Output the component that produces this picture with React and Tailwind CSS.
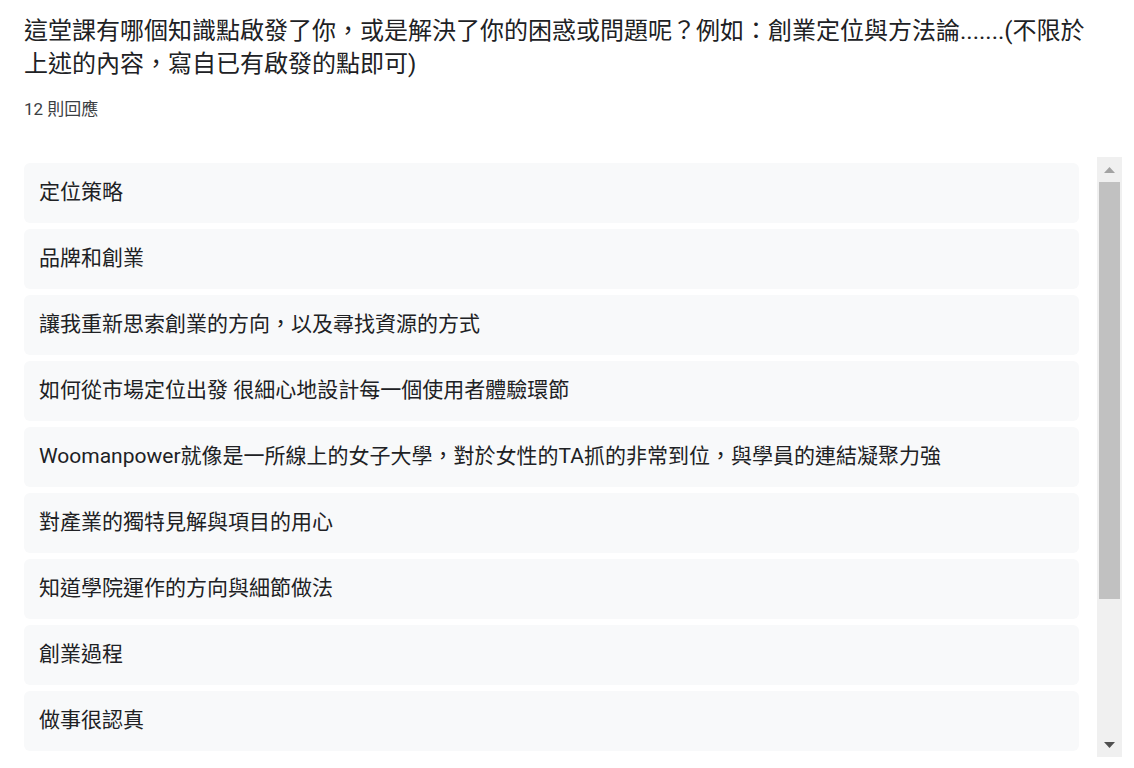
import React from 'react';

const answers = [
  '定位策略',
  '品牌和創業',
  '讓我重新思索創業的方向，以及尋找資源的方式',
  '如何從市場定位出發 很細心地設計每一個使用者體驗環節',
  'Woomanpower就像是一所線上的女子大學，對於女性的TA抓的非常到位，與學員的連結凝聚力強',
  '對產業的獨特見解與項目的用心',
  '知道學院運作的方向與細節做法',
  '創業過程',
  '做事很認真',
];

const font = { fontFamily: 'Roboto, "Noto Sans CJK TC", sans-serif' };

const App = () => {
  return (
    <div className="w-[1134px] h-[768px] bg-white overflow-hidden text-[#202124]" style={font}>
      <div className="pl-[24px] pr-[40px] pt-[15px]">
        <h1 className="text-[24px] leading-[33px] font-normal">
          這堂課有哪個知識點啟發了你，或是解決了你的困惑或問題呢？例如：創業定位與方法論.......(不限於上述的內容，寫自已有啟發的點即可)
        </h1>
        <p className="mt-[16px] text-[17px] leading-[24px] text-[#3c4043]">12 則回應</p>
      </div>

      <div className="flex mt-[36px] pl-[24px]">
        <div className="w-[1055px] h-[600px] overflow-hidden pt-[6px] flex flex-col gap-[6px]">
          {answers.map((a, i) => (
            <div key={i} className="shrink-0 h-[60px] rounded-[6px] bg-[#f8f9fa] px-[15px] flex items-center text-[21px] text-[#202124]">
              {a}
            </div>
          ))}
        </div>

        {/* fake scrollbar */}
        <div className="ml-[18px] w-[25px] h-[600px] bg-[#f0f0f0] flex flex-col items-center">
          <div className="h-[25px] w-full flex items-center justify-center">
            <svg width="11" height="6" viewBox="0 0 11 6"><path d="M0 6 L5.5 0 L11 6 Z" fill="#a3a3a3" /></svg>
          </div>
          <div className="w-[21px] h-[417px] bg-[#c1c1c1]" />
          <div className="flex-1" />
          <div className="h-[25px] w-full flex items-center justify-center">
            <svg width="11" height="6" viewBox="0 0 11 6"><path d="M0 0 L11 0 L5.5 6 Z" fill="#505050" /></svg>
          </div>
        </div>
      </div>
    </div>
  );
};

export default App;
